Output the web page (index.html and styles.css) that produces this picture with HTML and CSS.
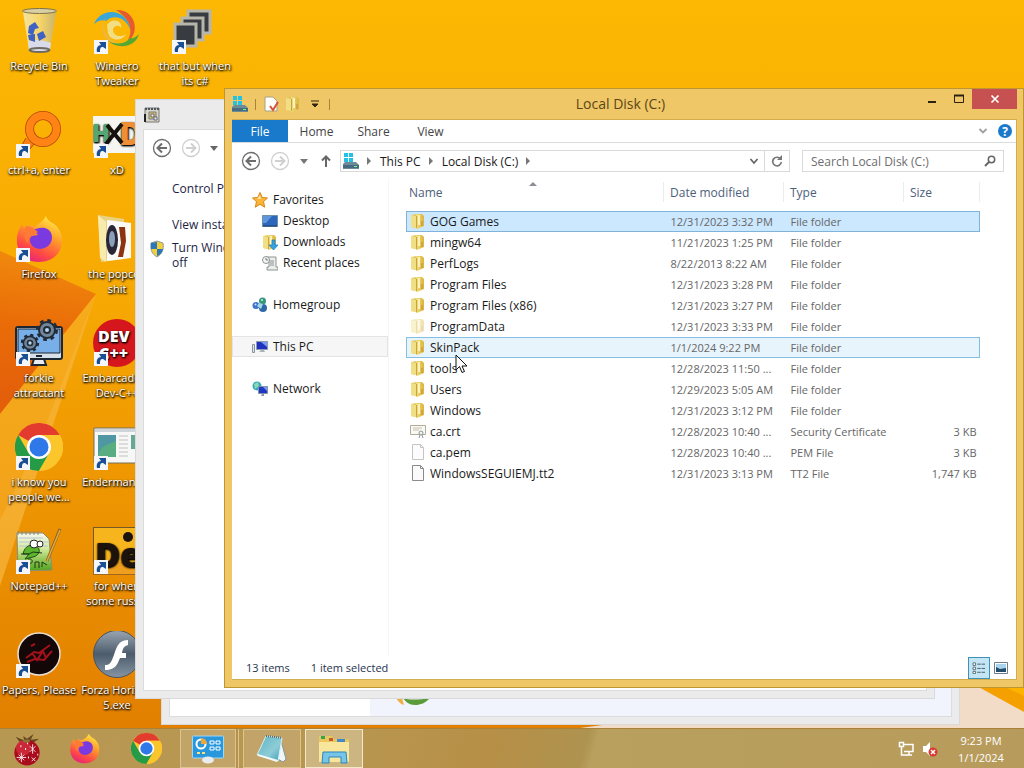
FILE: index.html
```html
<!DOCTYPE html>
<html lang="en">
<head>
<meta charset="utf-8">
<title>Local Disk (C:)</title>
<link rel="stylesheet" href="styles.css">
</head>
<body>
<svg class="defs" aria-hidden="true">
  <defs>
    <linearGradient id="wall" x1="0" y1="0" x2="0" y2="1"><stop offset="0" stop-color="#fcb803"/><stop offset=".4" stop-color="#f7a903"/><stop offset="1" stop-color="#e27f00"/></linearGradient>
    <linearGradient id="shade" gradientUnits="userSpaceOnUse" x1="40" y1="260" x2="20" y2="400"><stop offset="0" stop-color="#f0870c"/><stop offset=".45" stop-color="#ea6d08"/><stop offset="1" stop-color="#e35f0a"/></linearGradient>
    <linearGradient id="foldg" x1="0" y1="0" x2="1" y2="0"><stop offset="0" stop-color="#f0de82"/><stop offset="1" stop-color="#dab53a"/></linearGradient>
    <linearGradient id="fox" x1=".8" y1="0" x2=".3" y2="1"><stop offset="0" stop-color="#fff04a"/><stop offset=".4" stop-color="#ff9a2a"/><stop offset=".75" stop-color="#ff4a45"/><stop offset="1" stop-color="#e5237b"/></linearGradient>
    <linearGradient id="steel" x1="0" y1="0" x2="0" y2="1"><stop offset="0" stop-color="#9aa5b1"/><stop offset=".5" stop-color="#4d5c6c"/><stop offset="1" stop-color="#8695a3"/></linearGradient>
    <linearGradient id="bin" x1="0" y1="0" x2="1" y2="0"><stop offset="0" stop-color="#f3e3a0"/><stop offset=".5" stop-color="#f6d66a"/><stop offset="1" stop-color="#cbb36a"/></linearGradient>
    <linearGradient id="grn" x1="0" y1="0" x2="0" y2="1"><stop offset="0" stop-color="#f6f9ef"/><stop offset=".4" stop-color="#d5ea9c"/><stop offset="1" stop-color="#4fa318"/></linearGradient>
    <linearGradient id="pad" x1="0" y1="0" x2="1" y2="1"><stop offset="0" stop-color="#5fb4c4"/><stop offset=".6" stop-color="#8dccd6"/><stop offset="1" stop-color="#3f9bb4"/></linearGradient>
    <symbol id="shortcut" viewBox="0 0 14 14"><rect width="14" height="14" fill="#f4f6fa"/><path d="M3 12C2 8 4 5 7 5L5 2h7v7L9 7C6 7 6 9 6 12z" fill="#1b4f93"/></symbol>
    <symbol id="folder" viewBox="0 0 16 16"><path d="M1 2l6-1v14l-6-1z" fill="#dcc455"/><path d="M6 1h6l2 2v10l-7 3H6z" fill="url(#foldg)"/><path d="M1 2l5 1v12l-5-1z" fill="#f0df84"/><path d="M8 2h2v10H8z" fill="#fdf2bd"/><path d="M11 8h2v5h-2z" fill="#d3a346"/><path d="M6.500 3v12" stroke="#c9a53c" stroke-width="1"/></symbol>
    <symbol id="drive" viewBox="0 0 16 16"><path d="M1 0h4v4H1zM6 0h4v4H6zM1 5h4v4H1zM6 5h4v4H6z" fill="#22c2e4"/><path d="M0 11l2-2h11l3 3v4H0z" fill="#6f8b95"/><path d="M0 12h16v3H0z" fill="#456a82"/><path d="M11 13h3v1h-3z" fill="#6fff7c"/></symbol>
    <symbol id="firefox" viewBox="0 0 48 48"><path d="M31 1c1 4 5 6 8 8 8 6 10 17 6 26-4 8-12 12-21 12C9 47 1 36 2 24 2 17 5 13 7 9l2 4 4-3 7 1c4-2 8-5 11-10z" fill="url(#fox)"/><path d="M15 15c6 0 9-3 15-2 7 2 9 10 5 16-4 6-15 7-19 0-2-4-1-7 1-8l6-1c-2-3-5-3-8-5z" fill="#7b3ae0"/><path d="M11 11c4 0 8 2 12 6l-4 3c-5 1-7 5-5 9-5-3-6-11-3-18z" fill="#ff7a35"/></symbol>
    <symbol id="chrome" viewBox="0 0 48 48"><circle cx="24" cy="24" r="24" fill="#fbc52c"/><path d="M24 24L3.200 12A24 24 0 0 1 44.800 12H24z" fill="#e33b2e"/><path d="M3.200 12A24 24 0 0 0 24 48l10.400-18L24 24 13.600 30z" fill="#259b48"/><path d="M24 12h20.800A24 24 0 0 1 24 48l10.400-18z" fill="#fbc52c"/><circle cx="24" cy="24" r="12" fill="#fff"/><circle cx="24" cy="24" r="9.500" fill="#2f78ea"/></symbol>
    <symbol id="back" viewBox="0 0 20 20"><circle cx="10" cy="10" r="8.500" fill="none" stroke="currentColor" stroke-width="1.300"/><path d="M15 10H6M10 5.500L5.500 10l4.500 4.500" fill="none" stroke="currentColor" stroke-width="2"/></symbol>
    <symbol id="gear" viewBox="-12 -12 24 24"><circle r="8" fill="#72869b" stroke="#222c38" stroke-width="2"/><circle r="9.500" fill="none" stroke="#222c38" stroke-width="3" stroke-dasharray="3.700 3.760"/><circle r="3" fill="#b8d2ee" stroke="#222c38" stroke-width="2"/></symbol>
  </defs>
</svg>
<main class="desktop">
  <svg class="wallpaper" viewBox="0 0 1024 728" preserveAspectRatio="none" aria-hidden="true">
    <rect width="1024" height="728" fill="url(#wall)"/>
    <path d="M0 251L96 294 0 414z" fill="url(#shade)"/>
    <path d="M96 294L0 414v172z" fill="#f7ae2c" opacity=".6"/>
    <path d="M96 294L40 440 0 520v66z" fill="#f8bb4a" opacity=".4"/>
    <path d="M940 680h84v48H580z" fill="#f2dcc8"/>
    <path d="M966 680h58v32z" fill="#f4a000"/><path d="M990 680h34v16z" fill="#fdb400"/>
  </svg>

  <section class="icons" aria-label="Desktop">
    <button class="icon"><svg viewBox="0 0 48 48"><path d="M8 5l6 38c3 3 17 3 21 0L41 5z" fill="url(#bin)"/><path d="M13 35l1 8c4 3 17 3 21 0l1-7c-6-3-16-4-23-1z" fill="#d9dbea"/><ellipse cx="24.500" cy="4" rx="17" ry="2.500" fill="#d9cfa2" stroke="#7e7449"/><ellipse cx="24.500" cy="43" rx="10" ry="2" fill="none" stroke="#6f6a60" stroke-width="2"/><path d="M14 19l6-4 4 6-4 1-2 6-5-2zM13 28l7-1v8l-6-2zM22 27l6-3 3 6-7 4z" fill="#3f62c4"/></svg><span>Recycle Bin</span></button>
    <button class="icon"><svg viewBox="0 0 48 48"><path d="M1 17C8 0 34 0 38 24c-5-15-19-17-25-10-4-2-8 0-12 3z" fill="#3ba6d8"/><path d="M23 3c18-2 26 22 11 32 7-12 3-23-11-32z" fill="#e75a2c"/><path d="M46 27c-4 16-28 16-34 2 8 10 20 9 25 2 3 1 6-1 9-4z" fill="#57a832"/><path d="M13 11C8 20 13 32 25 36 12 38 4 22 13 11z" fill="#f0b63a"/><path d="M14 18c5-8 16-4 14 3-2-4-8-2-8 2 0 6 8 8 13 4-4 8-16 7-18-1z" fill="#efe9a5" opacity=".8"/></svg><svg class="link"><use href="#shortcut"/></svg><span>Winaero<br>Tweaker</span></button>
    <button class="icon"><svg viewBox="0 0 48 48"><g fill="#383b3f" stroke="#b7b5ac" stroke-width="3"><path d="M17 4h22v22H17z"/><path d="M11 11h21v22H11z"/><path d="M4 17h21v22H4z"/></g></svg><svg class="link"><use href="#shortcut"/></svg><span>that but when<br>its c#</span></button>

    <button class="icon"><svg viewBox="0 0 48 48"><path d="M11 27L3 41l6 4 10-12" fill="#fb8112" stroke="#b9490b"/><circle cx="28" cy="18" r="13.500" fill="none" stroke="#b9490b" stroke-width="9"/><circle cx="28" cy="18" r="13.500" fill="none" stroke="#ff8415" stroke-width="7.400"/></svg><svg class="link"><use href="#shortcut"/></svg><span>ctrl+a, enter</span></button>
    <button class="icon"><svg viewBox="0 0 48 48"><path d="M0 5h48v37H0z" fill="#f5f5f1"/><text x="-1" y="31" class="logo" font-size="24" fill="#55a672">H</text><text x="26" y="34" class="logo" font-size="32" fill="#ee8f35">D</text><path d="M14 14l15 18M29 13L13 33" stroke="#16130f" stroke-width="4"/></svg><svg class="link"><use href="#shortcut"/></svg><span>xD</span></button>
    <i></i>

    <button class="icon"><svg viewBox="0 0 48 48"><use href="#firefox"/></svg><svg class="link"><use href="#shortcut"/></svg><span>Firefox</span></button>
    <button class="icon"><svg viewBox="0 0 48 48"><path d="M5 0l26 4v40L8 47z" fill="#e8d282"/><path d="M14 5l24 3v35l-24 3z" fill="#fbfaf7"/><path d="M5 0l8 7v40l-6-4z" fill="#f7ecae"/><ellipse cx="19" cy="25" rx="6" ry="15" fill="#2a2637"/><ellipse cx="19" cy="24" rx="3" ry="8" fill="#8aa0b8"/><path d="M26 12h6l1 14-3 16h-5l3-14z" fill="#8c3412"/></svg><span>the popco..<br>shit</span></button>
    <i></i>

    <button class="icon"><svg viewBox="0 0 48 48"><rect x="1" y="8" width="46" height="32" rx="2" fill="#d8e0e8" stroke="#1d2733" stroke-width="2"/><path d="M3 10h42v24H3z" fill="#78afe8" stroke="#1d2733"/><path d="M19 40h10l2 6H17z" fill="#e9edf1" stroke="#1d2733" stroke-width="2"/><path d="M21 37h6" stroke="#1d2733" stroke-width="2"/><use href="#gear" x="20" y="-1" width="24" height="24"/><use href="#gear" x="5" y="14" width="20" height="20"/></svg><svg class="link"><use href="#shortcut"/></svg><span>forkie<br>attractant</span></button>
    <button class="icon"><svg viewBox="0 0 48 48"><circle cx="24" cy="24" r="24" fill="#d5161d"/><text class="logo" font-size="16" fill="#fff"><tspan x="5" y="23">DEV</tspan><tspan x="6" y="40">C++</tspan></text></svg><svg class="link"><use href="#shortcut"/></svg><span>Embarcadero<br>Dev-C++</span></button>
    <i></i>

    <button class="icon"><svg viewBox="0 0 48 48"><use href="#chrome"/></svg><svg class="link"><use href="#shortcut"/></svg><span>i know you<br>people we...</span></button>
    <button class="icon"><svg viewBox="0 0 48 48"><path d="M1 5h47v35H1z" fill="#f7f7f5" stroke="#77705f"/><path d="M2 6h46v3H2z" fill="#cfd4d9"/><path d="M5 12h18v22H5z" fill="#4f97a2"/><path d="M5 34c2-12 10-12 18-16v16z" fill="#58ae80"/><path d="M26 13h9M26 17h9M26 21h9M26 25h9M26 29h9M26 33h9" stroke="#bfc1c1"/><path d="M38 12h10v14H38z" fill="#65a895"/></svg><svg class="link"><use href="#shortcut"/></svg><span>Enderman's...</span></button>
    <i></i>

    <button class="icon"><svg viewBox="0 0 48 48"><path d="M2 6h26l6 6 3 31-34 1z" fill="url(#grn)" stroke="#8b8c77"/><path d="M4 11h24M4 15h29M4 19h29" stroke="#b6c2dc"/><path d="M3 4v4M7 4v4M11 4v4M15 4v4M19 4v4M23 4v4" stroke="#888"/><path d="M8 27c2-9 8-10 13-8 6 3 3 10-3 11l-8 2 4-5z" fill="#5bb52c" stroke="#254e17"/><circle cx="19" cy="17" r="4" fill="#fff" stroke="#222"/><circle cx="25" cy="17" r="3" fill="#fff" stroke="#222"/><path d="M6 27h8l4-2 9 1M13 32c6-1 5 6 1 4M20 41v-6h4v6M27 40v-5l5 3" fill="none" stroke="#1d3417"/><path d="M45 2L32 34" stroke="#87642a" stroke-width="3"/><path d="M45 3L32 34" stroke="#e5aa3b" stroke-width="1.500"/></svg><svg class="link"><use href="#shortcut"/></svg><span>Notepad++</span></button>
    <button class="icon"><svg viewBox="0 0 48 48"><rect x=".5" y=".5" width="47" height="47" fill="#f6b51d" stroke="#765826"/><path d="M0 35h48v13H0z" fill="#e77c20" opacity=".4"/><text x="2" y="40" class="logo" font-size="34" fill="#1c140c">De</text><circle cx="35" cy="10" r="5" fill="#1c140c"/></svg><svg class="link"><use href="#shortcut"/></svg><span>for when<br>some russia</span></button>
    <i></i>

    <button class="icon"><svg viewBox="0 0 48 48"><circle cx="24" cy="23" r="21" fill="#130708" stroke="#e9dfd5" stroke-width="1.500"/><path d="M11 27l8-6 5 1 11-8M12 31l8-3 9 1 8-9M16 15l4-2M17 22l5 7 6-9 3 7" fill="none" stroke="#a3121b" stroke-width="2"/></svg><svg class="link"><use href="#shortcut"/></svg><span>Papers, Please</span></button>
    <button class="icon"><svg viewBox="0 0 48 48"><circle cx="24" cy="23" r="23.500" fill="url(#steel)" stroke="#4b545f"/><path d="M35 9c-12 0-12 12-16 20-2 4-3 5-7 5v5c12 0 13-8 15-12h6v-5h-4c1-5 2-7 6-8z" fill="#fff"/></svg><span>Forza Horizon<br>5.exe</span></button>
  </section>

  <section class="window third"><div class="pane"><div class="side"></div><div class="tint"><svg class="leaf" viewBox="0 0 36 8"><path d="M0 0h6l2 7C4 6 2 3 0 0z" fill="#efb043"/><path d="M7 0c6 2 15 2 27 0-5 5-9 7-15 7S10 4 7 0z" fill="#5b9b38"/></svg></div></div></section>

  <section class="window second">
    <header><svg viewBox="0 0 16 16"><path d="M1 1h14v14H1z" fill="#d9d5c4" stroke="#777"/><path d="M1 2h14" stroke="#4d565e" stroke-width="2" stroke-dasharray="2 1"/><path d="M1 7v8" stroke="#222" stroke-width="2"/><path d="M5 5h7v7H5z" fill="#e3c162" stroke="#6c7c8a"/><path d="M7 7h3v3H7zM10 10h3v3h-3z" fill="#eef2f5" stroke="#667"/></svg></header>
    <div class="pane">
      <div class="history"><button aria-label="Back"><svg class="round"><use href="#back"/></svg></button><button class="off" aria-label="Forward"><svg class="round flip"><use href="#back"/></svg></button><svg class="caret" viewBox="0 0 8 5"><path d="M0 0h8L4 5z" fill="#666"/></svg></div>
      <a href="#" class="task home">Control Pa</a>
      <a href="#" class="task">View insta</a>
      <a href="#" class="task shielded"><svg class="shield" viewBox="0 0 16 18"><path d="M8 1l6 2c1 7-1 11-6 14C3 14 1 10 2 3z" fill="#f4cf37" stroke="#8e9aa5"/><path d="M8 2v7H2V3zM8 9h6c-1 4-3 6-6 7z" fill="#2d77b8"/></svg>Turn Wind<br>off</a>
    </div>
  </section>

  <section class="window explorer">
    <header class="titlebar">
      <div class="quick"><svg class="i16"><use href="#drive"/></svg><i class="bar"></i>
        <button aria-label="Properties"><svg viewBox="0 0 16 16"><path d="M2 1h8l4 4v10H2z" fill="#fdfdf9" stroke="#aaa17f"/><path d="M7 10l3 4 5-8" fill="none" stroke="#d5523a" stroke-width="2"/></svg></button>
        <button aria-label="New folder"><svg class="i16"><use href="#folder"/></svg></button>
        <button aria-label="Customize toolbar" class="custom"><svg viewBox="0 0 8 8"><path d="M0 1h8M1 4h6L4 7z" stroke="#33270c" fill="#33270c"/></svg></button><i class="bar"></i></div>
      <h1>Local Disk (C:)</h1>
      <div class="caption">
        <button aria-label="Minimize"><svg viewBox="0 0 12 12"><path d="M2 9h8" stroke="#2b2110" stroke-width="2"/></svg></button>
        <button aria-label="Maximize"><svg viewBox="0 0 12 12"><path d="M1.500 2.500h9v7h-9z" fill="none" stroke="#2b2110"/><path d="M1 2.500h10" stroke="#2b2110" stroke-width="2"/></svg></button>
        <button aria-label="Close" class="close"><svg viewBox="0 0 12 12"><path d="M2.500 2.500l7 7M9.500 2.500l-7 7" stroke="#fff" stroke-width="1.700"/></svg></button>
      </div>
    </header>
    <div class="client">
      <nav class="tabs"><button class="file">File</button><button>Home</button><button>Share</button><button>View</button>
        <span class="ribbonend"><button aria-label="Expand ribbon"><svg class="chev" viewBox="0 0 10 8"><path d="M1.500 2L5 5.500 8.500 2" fill="none" stroke="#a0a0a0" stroke-width="1.800"/></svg></button><button class="help" aria-label="Help">?</button></span></nav>
      <div class="addressrow">
        <button aria-label="Back"><svg class="round"><use href="#back"/></svg></button>
        <button class="off" aria-label="Forward"><svg class="round flip"><use href="#back"/></svg></button>
        <button class="recent" aria-label="Recent locations"><svg class="caret" viewBox="0 0 8 5"><path d="M0 0h8L4 5z" fill="#777"/></svg></button>
        <button class="up" aria-label="Up"><svg viewBox="0 0 12 14"><path d="M6 13V3M2 6.500L6 2.500l4 4" fill="none" stroke="#666" stroke-width="2"/></svg></button>
        <div class="address"><svg class="i16"><use href="#drive"/></svg><svg class="tri" viewBox="0 0 5 8"><path d="M0 0l4 4-4 4z" fill="#777"/></svg><button>This PC</button><svg class="tri" viewBox="0 0 5 8"><path d="M0 0l4 4-4 4z" fill="#777"/></svg><button>Local Disk (C:)</button><svg class="tri" viewBox="0 0 5 8"><path d="M0 0l4 4-4 4z" fill="#777"/></svg>
          <button class="drop" aria-label="Previous locations"><svg class="chev" viewBox="0 0 10 8"><path d="M1.500 2L5 6 8.500 2" fill="none" stroke="#666" stroke-width="1.800"/></svg></button>
          <button class="refresh" aria-label="Refresh"><svg viewBox="0 0 12 12"><path d="M9.500 4A4.300 4.300 0 1 0 10.300 7" fill="none" stroke="#777" stroke-width="1.700"/><path d="M6 5h5V0z" fill="#777"/></svg></button></div>
        <label class="search"><input type="text" placeholder="Search Local Disk (C:)" aria-label="Search Local Disk (C:)"><svg viewBox="0 0 12 12"><circle cx="7.500" cy="4.500" r="3.200" fill="none" stroke="#666" stroke-width="1.500"/><path d="M5 7L1 11" stroke="#666" stroke-width="2"/></svg></label>
      </div>
      <div class="body">
        <nav class="tree">
          <a href="#"><svg viewBox="0 0 16 16"><path d="M8 .5l2.200 5 5.300.5-4 3.600 1.200 5.600L8 12.300l-4.700 2.900 1.200-5.600-4-3.600L5.800 5.500z" fill="#fbb63a" stroke="#d98318"/><path d="M8 3l1 4H5z" fill="#ffe6a0"/></svg>Favorites</a>
          <a href="#" class="sub"><svg viewBox="0 0 16 16"><path d="M.5 2.500h15v11H.5z" fill="#2c66bd" stroke="#6d8fae"/><path d="M1 3h9l-6 7H1z" fill="#5f96dc"/><path d="M1 13h14" stroke="#223b66"/></svg>Desktop</a>
          <a href="#" class="sub"><svg viewBox="0 0 16 16"><use href="#folder"/><path d="M10 6h3v5h3l-4.500 5L7 11h3z" fill="#34a5e2" stroke="#1f75b6" stroke-width=".700"/></svg>Downloads</a>
          <a href="#" class="sub"><svg viewBox="0 0 16 16"><path d="M5 2h9v10h2v3H5v-3h2V4H5z" fill="#eceeed" stroke="#8c9490"/><path d="M8 6h4M8 8h4M8 10h4" stroke="#8c9490"/><circle cx="4" cy="5" r="3.500" fill="#f4f6f6" stroke="#8c9490"/><path d="M4 3v2h2" fill="none" stroke="#777"/></svg>Recent places</a>
          <a href="#" class="gap"><svg viewBox="0 0 16 16"><circle cx="10.500" cy="4" r="3.500" fill="#35977b"/><circle cx="4" cy="8.500" r="3.500" fill="#3f72cb"/><circle cx="11" cy="11" r="4" fill="#2f69a8"/><path d="M7 6l4 1-2 5-4-3z" fill="#9fd9e8"/><circle cx="10" cy="3" r="1" fill="#c3f0e3"/><circle cx="3.500" cy="7.500" r="1" fill="#d4e5fb"/></svg>Homegroup</a>
          <a href="#" class="gap here"><svg viewBox="0 0 16 16"><path d="M4.500 2.500h11v8h-11z" fill="#2030c0" stroke="#8c9bad"/><path d="M9 3h6v5z" fill="#7b9ae9"/><path d="M9 11h3l1 2H7z" fill="#aab3bd"/><path d="M.5 5.500h2v8h-2z" fill="#dfe5ea" stroke="#89949f"/></svg>This PC</a>
          <a href="#" class="gap"><svg viewBox="0 0 16 16"><circle cx="5" cy="5" r="4.500" fill="#32aabb"/><path d="M2 3l4-2 1 4-4 3z" fill="#89d9b3"/><path d="M6.500 5.500h9v7h-9z" fill="#2037c5" stroke="#8493aa"/><path d="M11 6h4v4z" fill="#7b9ae9"/><path d="M10 13h2v2h-3z" fill="#8c98a5"/></svg>Network</a>
        </nav>
        <div class="list">
          <table>
            <colgroup><col><col class="c-date"><col class="c-type"><col class="c-size"></colgroup>
            <thead><tr><th>Name<svg class="sort" viewBox="0 0 8 4"><path d="M0 4l4-4 4 4z" fill="#8a8f96"/></svg></th><th>Date modified</th><th>Type</th><th>Size</th></tr></thead>
            <tbody>
              <tr class="sel"><td><svg><use href="#folder"/></svg>GOG Games</td><td>12/31/2023 3:32 PM</td><td>File folder</td><td></td></tr>
              <tr><td><svg><use href="#folder"/></svg>mingw64</td><td>11/21/2023 1:25 PM</td><td>File folder</td><td></td></tr>
              <tr><td><svg><use href="#folder"/></svg>PerfLogs</td><td>8/22/2013 8:22 AM</td><td>File folder</td><td></td></tr>
              <tr><td><svg><use href="#folder"/></svg>Program Files</td><td>12/31/2023 3:28 PM</td><td>File folder</td><td></td></tr>
              <tr><td><svg><use href="#folder"/></svg>Program Files (x86)</td><td>12/31/2023 3:27 PM</td><td>File folder</td><td></td></tr>
              <tr><td><svg class="faded"><use href="#folder"/></svg>ProgramData</td><td>12/31/2023 3:33 PM</td><td>File folder</td><td></td></tr>
              <tr class="hover"><td><svg><use href="#folder"/></svg>SkinPack<svg class="pointer" viewBox="0 0 13 20"><path d="M1 1v15l3.500-3.500L7 18.500l2.500-1L7 12h5z" fill="#fff" stroke="#111"/></svg></td><td>1/1/2024 9:22 PM</td><td>File folder</td><td></td></tr>
              <tr><td><svg><use href="#folder"/></svg>tools</td><td>12/28/2023 11:50 ...</td><td>File folder</td><td></td></tr>
              <tr><td><svg><use href="#folder"/></svg>Users</td><td>12/29/2023 5:05 AM</td><td>File folder</td><td></td></tr>
              <tr><td><svg><use href="#folder"/></svg>Windows</td><td>12/31/2023 3:12 PM</td><td>File folder</td><td></td></tr>
              <tr><td><svg viewBox="0 0 16 16"><path d="M.5 2.500h15v9H.5z" fill="#fafaf5" stroke="#b3ad97"/><path d="M3 5h9M3 7h6" stroke="#c4c0b0"/><circle cx="11" cy="10" r="2" fill="#f2f2f2" stroke="#8f9698"/><path d="M10 12l-1 3M12 12l1 3" stroke="#8f9698"/></svg>ca.crt</td><td>12/28/2023 10:40 ...</td><td>Security Certificate</td><td>3 KB</td></tr>
              <tr><td><svg viewBox="0 0 16 16"><path d="M2.500.500h8l3 3v12h-11z" fill="#fcfcfc" stroke="#c4c4c4"/><path d="M10.500.500v3h3" fill="none" stroke="#c4c4c4"/></svg>ca.pem</td><td>12/28/2023 10:40 ...</td><td>PEM File</td><td>3 KB</td></tr>
              <tr><td><svg viewBox="0 0 16 16"><path d="M2.500.500h8l3 3v12h-11z" fill="#fafafa" stroke="#8a8a8a"/><path d="M10.500.500v3h3" fill="none" stroke="#8a8a8a"/></svg>WindowsSEGUIEMJ.tt2</td><td>12/31/2023 3:13 PM</td><td>TT2 File</td><td>1,747 KB</td></tr>
            </tbody>
          </table>
        </div>
      </div>
      <footer class="status"><span>13 items</span><span>1 item selected</span>
        <div class="views"><button class="on" aria-label="Details"><svg viewBox="0 0 16 14"><path d="M1 1h3v3H1zM1 6h3v3H1zM1 11h3v2.500H1z" fill="#fff" stroke="#4d6477"/><path d="M6 2.500h4M11 2.500h4M6 7.500h4M11 7.500h4M6 12h4M11 12h4" stroke="#34495c"/></svg></button><button aria-label="Large icons"><svg viewBox="0 0 14 12"><path d="M.5.500h13v11H.5z" fill="#fff" stroke="#6a7e90"/><path d="M2 2h10v8H2z" fill="#a9d4ee"/><path d="M2 5l4 2 6-1v4H2z" fill="#204e6a"/></svg></button></div>
      </footer>
    </div>
  </section>
</main>

<footer class="taskbar">
  <div class="apps">
    <button class="start" aria-label="Start"><svg viewBox="0 0 32 36"><path d="M4 5l9 4-1-5 4 3 7-5-3 6 9-1-9 6H10z" fill="#684622"/><circle cx="16" cy="22" r="13.500" fill="#a90c1d"/><circle cx="12" cy="17" r="8" fill="#d93443" opacity=".7"/><path d="M7 24l6 6M13 24l-6 6M10 22v10M5 27h10M19 15l6 6M25 15l-6 6M22 13v10M21 27l4 4M25 27l-4 4" stroke="#fae5e5"/><path d="M9 15h1M14 18h1M16 12h1M17 27h1M27 24h1" stroke="#fff" stroke-width="2"/><path d="M12 8h7v3h-7z" fill="#8c7435"/></svg></button>
    <button class="pin" aria-label="Firefox"><svg><use href="#firefox"/></svg></button>
    <button class="pin" aria-label="Chrome"><svg><use href="#chrome"/></svg></button>
    <button class="task-btn stack" aria-label="Control Panel"><svg viewBox="0 0 34 30"><rect x="1.500" y="2" width="31" height="22" rx="1" fill="#2897dc" stroke="#9fd8f5"/><circle cx="10" cy="10" r="4.500" fill="none" stroke="#fff" stroke-width="2"/><path d="M10 10V4a6 6 0 0 1 6 6z" fill="#f4a53a"/><path d="M19 7h4v3h-4zM25 7h4v3h-4zM19 13h4v3h-4zM25 13h4v3h-4z" fill="none" stroke="#fff"/><path d="M6 19h3M11 19h3" stroke="#ffe07a" stroke-width="2"/><ellipse cx="17" cy="26" rx="6" ry="3.500" fill="#e9ecee"/></svg></button>
    <button class="task-btn" aria-label="Notepad"><svg viewBox="0 0 34 30"><path d="M25 3l6 22-3 3-7-4z" fill="#f0f6f7" stroke="#7f999d"/><path d="M11 2l16 2-4 23L2 21z" fill="url(#pad)" stroke="#d7f0f3"/><path d="M11 2l16 2" stroke="#476c73" stroke-width="2" stroke-dasharray="1 1"/><path d="M3 20l20 6-1 2-19-6z" fill="#f1f8f8"/></svg></button>
    <button class="task-btn active" aria-label="File Explorer"><svg viewBox="0 0 34 30"><path d="M2 2h13l2 3h15v23H2z" fill="#eac65d"/><path d="M4 2h4v3H4z" fill="#35a354"/><path d="M12 4h4v3h-4z" fill="#c85b2b"/><path d="M20 5h8v3h-8z" fill="#4389ca"/><path d="M2 8h30v20H2z" fill="#f9e69d"/><path d="M5 29l1-11h23l1 11h-6v-6H12v6z" fill="#76c5e9" stroke="#2d87b9"/></svg></button>
  </div>
  <div class="tray">
    <button aria-label="Network"><svg viewBox="0 0 16 16"><path d="M6 3.500h9v7H6M8 14h6M11 11v3" fill="none" stroke="#fff" stroke-width="1.500"/><path d="M1.500 1.500h4v4h-4zM3.500 6v8h5" fill="none" stroke="#fff" stroke-width="1.500"/></svg></button>
    <button aria-label="Muted"><svg viewBox="0 0 16 16"><path d="M1 5h3l4-4v14l-4-4H1z" fill="#fff"/><circle cx="11" cy="11" r="4.500" fill="#d63a30"/><path d="M9 9l4 4M13 9l-4 4" stroke="#fff" stroke-width="1.500"/></svg></button>
    <time><span>9:23 PM</span><span>1/1/2024</span></time>
  </div>
</footer>
</body>
</html>
```
FILE: styles.css
```css
* { box-sizing: border-box; }
body { margin: 0; height: 100vh; display: flex; flex-direction: column; overflow: hidden; font: 12px/15px "Open Sans", "Noto Sans", sans-serif; color: #1a1a1a; }
button { border: 0; padding: 0; background: none; font: inherit; color: inherit; display: flex; align-items: center; justify-content: center; }
a { color: inherit; text-decoration: none; }
svg { display: block; flex: none; }
.defs { position: absolute; width: 0; height: 0; }
.i16 { width: 16px; height: 16px; }
.logo { font-family: "Open Sans", sans-serif; font-weight: 800; }

.desktop { flex: 1; position: relative; overflow: hidden; min-height: 0; }
.wallpaper { position: absolute; inset: 0; width: 100%; height: 100%; }

.icons { position: relative; display: grid; grid-template-columns: repeat(3, 78px); grid-auto-rows: 104px; width: 234px; }
.icon { position: relative; flex-direction: column; justify-content: flex-start; padding-top: 7px; gap: 3px; color: #fff; font-size: 11px; font-weight: 500; white-space: nowrap; text-shadow: 1px 1px 2px #000, 0 1px 2px #000; }
.icon > svg { width: 48px; height: 48px; }
.icon > .link { position: absolute; left: 16px; top: 40px; width: 14px; height: 14px; }

.window { position: absolute; background: #ebebec; border: 1px solid #d9d9da; display: flex; flex-direction: column; }
.pane { flex: 1; background: #fff; border: 1px solid #dcdcdd; }
.third { left: 161px; right: 64px; top: 140px; bottom: 3px; padding: 7px; }
.third .pane { display: flex; }
.side { width: 200px; }
.tint { flex: 1; background: #f1f3fd; display: flex; align-items: flex-end; padding: 0 26px 10px; }
.leaf { width: 36px; height: 8px; }
.second { left: 135px; right: 89px; top: 99px; bottom: 29px; padding: 0 7px 7px; }
.second header { height: 29px; padding: 7px 1px; }
.second header svg { width: 16px; height: 16px; }
.history { display: flex; align-items: center; gap: 9px; padding: 8px; color: #6d6d6d; }
.round { width: 20px; height: 20px; }
.flip { transform: rotate(180deg); }
.off { color: #d0d0d0; }
.caret { width: 8px; height: 5px; }
.task { display: block; position: relative; padding-left: 28px; margin-bottom: 8px; color: #1e1e46; }
.task.home { margin: 15px 0 21px; }
.shield { position: absolute; left: 5px; top: 0; width: 16px; height: 18px; }

.explorer { left: 224px; right: 0; top: 88px; bottom: 40px; padding: 0 6px 7px 7px; background: #efc766; border-color: #c0942f; }
.titlebar { height: 30px; display: grid; grid-template-columns: 1fr auto 1fr; }
.titlebar h1 { margin: 0; padding-right: 8px; font-size: 14px; line-height: 30px; font-weight: 400; color: #5c4619; }
.quick { display: flex; align-items: center; gap: 7px; }
.quick svg { width: 16px; height: 16px; }
.quick .custom svg { width: 8px; height: 8px; }
.quick button { width: 15px; }
.bar { width: 1px; height: 11px; background: #a78438; }
.caption { display: flex; justify-content: flex-end; align-items: flex-start; }
.caption svg { width: 12px; height: 12px; }
.caption button { width: 27px; height: 20px; }
.caption .close { width: 45px; background: #c75050; }
.client { flex: 1; min-height: 0; display: flex; flex-direction: column; background: #fff; border: 1px solid #d5ad51; border-left: 0; }
.tabs { display: flex; height: 23px; border-bottom: 1px solid #dadbdc; color: #444; }
.tabs > button { width: 57px; }
.tabs > .file { width: 56px; background: #1979ca; color: #fff; }
.ribbonend { margin-left: auto; display: flex; align-items: center; gap: 10px; padding-right: 4px; }
.chev { width: 10px; height: 8px; }
.help { width: 14px; height: 14px; border-radius: 50%; background: #1979ca; color: #fff; font-weight: 700; }
.addressrow { display: flex; align-items: center; padding: 7px 12px 7px 9px; color: #6d6d6d; }
.addressrow > .off { margin-left: 9px; }
.recent { width: 28px; }
.up { width: 16px; margin-right: 6px; }
.up svg { width: 12px; height: 14px; }
.address { flex: 1; display: flex; align-items: center; height: 22px; border: 1px solid #d9d9d9; padding-left: 2px; color: #1a1a1a; }
.tri { width: 5px; height: 8px; margin: 0 8px; }
.drop { width: 20px; margin-left: auto; }
.refresh { width: 25px; align-self: stretch; border-left: 1px solid #d9d9d9; }
.refresh svg { width: 12px; height: 12px; }
.search { display: flex; align-items: center; width: 202px; height: 22px; margin-left: 12px; padding: 0 7px 0 8px; border: 1px solid #d9d9d9; }
.search input { flex: 1; min-width: 0; border: 0; padding: 0; outline: 0; background: none; font: inherit; }
.search input::placeholder { color: #6d6d6d; opacity: 1; }
.search svg { width: 12px; height: 12px; }

.body { flex: 1; min-height: 0; display: flex; }
.tree { width: 157px; padding-top: 10px; border-right: 1px solid #f6f6f6; }
.tree a { display: flex; align-items: center; gap: 5px; height: 21px; padding-left: 20px; }
.tree svg { width: 16px; height: 16px; }
.tree .sub { padding-left: 30px; }
.tree .gap { margin-top: 21px; }
.tree .here { background: #f6f6f6; outline: 1px solid #e4e4e4; outline-offset: -1px; }
.list { flex: 1; padding: 3px 36px 0 17px; }
table { width: 100%; table-layout: fixed; border-collapse: collapse; white-space: nowrap; }
.c-date, .c-type { width: 120px; }
.c-size { width: 76px; }
th { position: relative; height: 20px; padding: 0 3px 0 6px; border-right: 1px solid #ececec; text-align: left; font-weight: 400; color: #4c607a; }
th:first-child { padding-left: 3px; }
.sort { position: absolute; left: 48%; top: 0; width: 8px; height: 4px; }
tbody::before { content: ""; display: block; height: 9px; }
td { height: 21px; padding: 0 3px 0 7px; color: #666; font-size: 11px; }
td:first-child { position: relative; padding-left: 24px; color: #1a1a1a; font-size: 12px; }
td:last-child { text-align: right; }
td > svg { position: absolute; left: 4px; top: 2px; width: 16px; height: 16px; }
.faded { opacity: .4; }
.sel { background: #cce8ff; outline: 1px solid #7fb3dc; outline-offset: -1px; }
.hover { background: #e8f4fc; outline: 1px solid #83bfe3; outline-offset: -1px; }
td > .pointer { left: 49px; top: 17px; width: 13px; height: 20px; z-index: 2; }
.status { height: 23px; display: flex; align-items: center; gap: 21px; padding: 0 4px 0 14px; color: #26334d; font-size: 11px; }
.views { margin-left: auto; display: flex; }
.views button { width: 22px; height: 22px; }
.views .on { background: #c4e5f3; border: 1px solid #3f91b5; }
.views svg { width: 14px; height: 12px; }

.taskbar { height: 40px; display: flex; justify-content: space-between; border-top: 1px solid #a98139; background: linear-gradient(105deg, #b79853 0, #b8964f 35%, #b78f46 48%, #ae9350 57%, #b9a05e 58%, #b79b5c 100%); color: #fff; }
.apps { display: flex; align-items: center; }
.start { width: 53px; }
.start svg { width: 30px; height: 36px; }
.pin { width: 62px; }
.pin svg { width: 31px; height: 31px; }
.task-btn { width: 58px; height: 39px; margin-left: 4px; border: 1px solid #dcc48f; background: #c2a368; }
.task-btn svg { width: 34px; height: 30px; }
.stack { width: 56px; margin: 0 3px; box-shadow: 2px 0 0 #b59050, 3px 0 0 #dfc48b; }
.active { background: #cdb582; border-color: #f3e8c8; }
.tray { display: flex; align-items: center; padding-right: 16px; gap: 8px; }
.tray svg { width: 16px; height: 16px; }
.tray time { display: flex; flex-direction: column; align-items: center; gap: 2px; min-width: 54px; margin-left: 8px; font-size: 11px; }
```
